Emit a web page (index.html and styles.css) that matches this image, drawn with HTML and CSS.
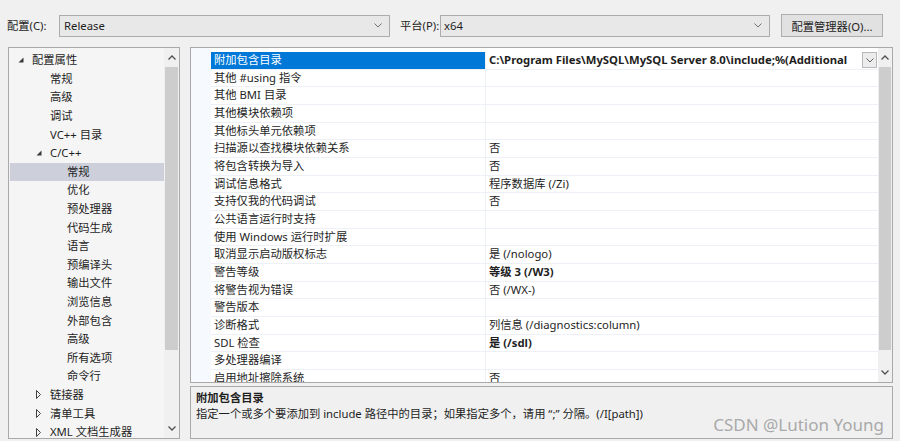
FILE: index.html
```html
<!DOCTYPE html>
<html lang="zh-CN">
<head>
<meta charset="utf-8">
<title>属性页</title>
<link rel="stylesheet" href="styles.css">
</head>
<body>
<div class="page">
  <div class="toolbar">
    <span class="tb-label cfg-label">配置(C):</span>
    <div class="combo combo-cfg"><span>Release</span><svg class="chev" width="8" height="5" viewBox="0 0 8 5"><path d="M0.5 0.5 L4 4 L7.5 0.5" fill="none" stroke="#707070" stroke-width="1"/></svg></div>
    <span class="tb-label plat-label">平台(P):</span>
    <div class="combo combo-plat"><span>x64</span><svg class="chev" width="8" height="5" viewBox="0 0 8 5"><path d="M0.5 0.5 L4 4 L7.5 0.5" fill="none" stroke="#707070" stroke-width="1"/></svg></div>
    <button class="btn">配置管理器(O)...</button>
  </div>

  <div class="main">
    <div class="tree-panel">
      <div class="tree">
        <div class="ti l1"><span class="tw"><svg width="6" height="6" viewBox="0 0 6 6"><polygon points="5.5,0.5 5.5,5.5 0.5,5.5" fill="#3a3a3a"/></svg></span>配置属性</div>
        <div class="ti l2">常规</div>
        <div class="ti l2">高级</div>
        <div class="ti l2">调试</div>
        <div class="ti l2">VC++ 目录</div>
        <div class="ti l2t"><span class="tw"><svg width="6" height="6" viewBox="0 0 6 6"><polygon points="5.5,0.5 5.5,5.5 0.5,5.5" fill="#3a3a3a"/></svg></span>C/C++</div>
        <div class="ti l3 sel">常规</div>
        <div class="ti l3">优化</div>
        <div class="ti l3">预处理器</div>
        <div class="ti l3">代码生成</div>
        <div class="ti l3">语言</div>
        <div class="ti l3">预编译头</div>
        <div class="ti l3">输出文件</div>
        <div class="ti l3">浏览信息</div>
        <div class="ti l3">外部包含</div>
        <div class="ti l3">高级</div>
        <div class="ti l3">所有选项</div>
        <div class="ti l3">命令行</div>
        <div class="ti l2t"><span class="tw"><svg width="6" height="9" viewBox="0 0 6 9"><polygon points="0.5,0.5 4.5,4.5 0.5,8.5" fill="none" stroke="#404040" stroke-width="1"/></svg></span>链接器</div>
        <div class="ti l2t"><span class="tw"><svg width="6" height="9" viewBox="0 0 6 9"><polygon points="0.5,0.5 4.5,4.5 0.5,8.5" fill="none" stroke="#404040" stroke-width="1"/></svg></span>清单工具</div>
        <div class="ti l2t"><span class="tw"><svg width="6" height="9" viewBox="0 0 6 9"><polygon points="0.5,0.5 4.5,4.5 0.5,8.5" fill="none" stroke="#404040" stroke-width="1"/></svg></span>XML 文档生成器</div>
      </div>
      <div class="vscroll tree-scroll">
        <div class="arrow"><svg width="8" height="5" viewBox="0 0 8 5"><path d="M0.5 4.5 L4 1 L7.5 4.5" fill="none" stroke="#505050" stroke-width="1.3"/></svg></div>
        <div class="track"><div class="thumb"></div></div>
        <div class="arrow"><svg width="8" height="5" viewBox="0 0 8 5"><path d="M0.5 0.5 L4 4 L7.5 0.5" fill="none" stroke="#505050" stroke-width="1.3"/></svg></div>
      </div>
    </div>

    <div class="right">
      <div class="grid-panel">
        <div class="gutter"></div>
        <div class="rows">
          <div class="row"><div class="name hl">附加包含目录</div><div class="value bold first"><span class="vtext">C:\Program Files\MySQL\MySQL Server 8.0\include;%(Additional</span><span class="ddbtn"><svg width="8" height="5" viewBox="0 0 8 5"><path d="M0.5 0.5 L4 4 L7.5 0.5" fill="none" stroke="#606060" stroke-width="1"/></svg></span></div></div>
          <div class="row"><div class="name">其他 #using 指令</div><div class="value"></div></div>
          <div class="row"><div class="name">其他 BMI 目录</div><div class="value"></div></div>
          <div class="row"><div class="name">其他模块依赖项</div><div class="value"></div></div>
          <div class="row"><div class="name">其他标头单元依赖项</div><div class="value"></div></div>
          <div class="row"><div class="name">扫描源以查找模块依赖关系</div><div class="value">否</div></div>
          <div class="row"><div class="name">将包含转换为导入</div><div class="value">否</div></div>
          <div class="row"><div class="name">调试信息格式</div><div class="value">程序数据库 (/Zi)</div></div>
          <div class="row"><div class="name">支持仅我的代码调试</div><div class="value">否</div></div>
          <div class="row"><div class="name">公共语言运行时支持</div><div class="value"></div></div>
          <div class="row"><div class="name">使用 Windows 运行时扩展</div><div class="value"></div></div>
          <div class="row"><div class="name">取消显示启动版权标志</div><div class="value">是 (/nologo)</div></div>
          <div class="row"><div class="name">警告等级</div><div class="value bold">等级 3 (/W3)</div></div>
          <div class="row"><div class="name">将警告视为错误</div><div class="value">否 (/WX-)</div></div>
          <div class="row"><div class="name">警告版本</div><div class="value"></div></div>
          <div class="row"><div class="name">诊断格式</div><div class="value">列信息 (/diagnostics:column)</div></div>
          <div class="row"><div class="name">SDL 检查</div><div class="value bold">是 (/sdl)</div></div>
          <div class="row"><div class="name">多处理器编译</div><div class="value"></div></div>
          <div class="row"><div class="name">启用地址擦除系统</div><div class="value">否</div></div>
        </div>
        <div class="vscroll grid-scroll">
          <div class="arrow"><svg width="8" height="5" viewBox="0 0 8 5"><path d="M0.5 4.5 L4 1 L7.5 4.5" fill="none" stroke="#505050" stroke-width="1.3"/></svg></div>
          <div class="track"><div class="thumb"></div></div>
          <div class="arrow"><svg width="8" height="5" viewBox="0 0 8 5"><path d="M0.5 0.5 L4 4 L7.5 0.5" fill="none" stroke="#505050" stroke-width="1.3"/></svg></div>
        </div>
      </div>
      <div class="desc">
        <div class="desc-title">附加包含目录</div>
        <div class="desc-text">指定一个或多个要添加到 include 路径中的目录；如果指定多个，请用 “;” 分隔。(/I[path])</div>
        <div class="watermark">CSDN @Lution Young</div>
      </div>
    </div>
  </div>
</div>
</body>
</html>
```
FILE: styles.css
```css
html, body {
  margin: 0;
  padding: 0;
}
body {
  background: #f0f0f0;
  font-family: "Noto Sans", "Noto Sans CJK SC", sans-serif;
  font-size: 11.3px;
  color: #1e1e1e;
  width: 900px;
  height: 441px;
  overflow: hidden;
}
.page {
  width: 900px;
  height: 441px;
  display: flex;
  flex-direction: column;
}

/* toolbar */
.toolbar {
  display: flex;
  align-items: center;
  height: 23px;
  margin-top: 14px;
  padding-left: 7px;
}
.tb-label {
  flex: none;
  line-height: 16px;
}
.cfg-label { width: 52px; }
.plat-label { width: 40px; margin-left: 10px; }
.combo {
  box-sizing: border-box;
  height: 22px;
  border: 1px solid #acacac;
  background: #e8e8e8;
  display: flex;
  align-items: center;
  justify-content: space-between;
  padding: 0 7px 0 4px;
  flex: none;
}
.combo-cfg { width: 331px; }
.combo-plat { width: 330px; padding-left: 3px; }
.btn {
  box-sizing: border-box;
  margin-left: 11px;
  width: 102px;
  height: 23px;
  border: 1px solid #adadad;
  background: #e1e1e1;
  font: inherit;
  color: #1e1e1e;
  padding: 0;
  flex: none;
}

/* main */
.main {
  display: flex;
  margin-top: 10px;
  padding-left: 8px;
  gap: 10px;
  height: 392px;
}

.tree-panel {
  box-sizing: border-box;
  width: 172px;
  height: 392px;
  border: 1px solid #a9a9a9;
  background: #f5f5f5;
  display: flex;
  overflow: hidden;
}
.tree {
  flex: 1;
  padding-top: 3px;
  overflow: hidden;
}
.ti {
  display: flex;
  align-items: center;
  height: 18.6px;
  line-height: 16px;
  white-space: nowrap;
}
.tw {
  width: 14px;
  flex: none;
  display: flex;
  align-items: center;
}
.l1 { padding-left: 9px; }
.l2 { padding-left: 41px; }
.l2t { padding-left: 27px; }
.l3 { padding-left: 58px; }
.sel {
  background: #cdcfdb;
  margin-left: 1px;
  padding-left: 57px;
}

.vscroll {
  flex: none;
  width: 15px;
  display: flex;
  flex-direction: column;
  background: #f0f0f0;
}
.arrow {
  height: 19px;
  display: flex;
  align-items: center;
  justify-content: center;
  flex: none;
}
.track {
  flex: 1;
  display: flex;
  flex-direction: column;
  padding: 0 1px;
}
.thumb {
  background: #cdcdcd;
  height: 283px;
}

/* right column */
.right {
  width: 703px;
  display: flex;
  flex-direction: column;
  gap: 3px;
}
.grid-panel {
  box-sizing: border-box;
  height: 336px;
  border: 1px solid #a9a9a9;
  background: #ffffff;
  display: flex;
  overflow: hidden;
}
.gutter {
  width: 20px;
  flex: none;
  background: #f6f9fd;
}
.rows {
  flex: 1;
  padding-top: 4px;
  overflow: hidden;
}
.row {
  display: flex;
  height: 17.67px;
  box-sizing: border-box;
  border-bottom: 1px solid #edf1f7;
}
.name {
  width: 275px;
  flex: none;
  box-sizing: border-box;
  padding-left: 3px;
  border-right: 1px solid #edf1f7;
  line-height: 16.67px;
  white-space: nowrap;
}
.name.hl {
  background: #0078d7;
  color: #ffffff;
}
.value {
  flex: 1;
  min-width: 0;
  padding-left: 3px;
  line-height: 16.67px;
  white-space: nowrap;
  overflow: hidden;
}
.bold { font-weight: bold; }
.value.first {
  display: flex;
  align-items: center;
  padding-right: 1px;
}
.vtext {
  flex: 1;
  min-width: 0;
  white-space: nowrap;
}
.ddbtn {
  flex: none;
  box-sizing: border-box;
  width: 15px;
  height: 16px;
  border: 1px solid #b8b8b8;
  background: #ececec;
  display: flex;
  align-items: center;
  justify-content: center;
  margin-left: 2px;
}
.grid-scroll { width: 14px; }

/* description */
.desc {
  position: relative;
  box-sizing: border-box;
  height: 53px;
  border: 1px solid #a9a9a9;
  background: #f0f0f0;
  padding: 3px 0 0 5px;
}
.desc-title {
  font-weight: bold;
  line-height: 16px;
}
.desc-text {
  line-height: 16px;
}
.watermark {
  position: absolute;
  right: 8px;
  bottom: 2px;
  font-family: "Noto Sans", sans-serif;
  font-size: 17px;
  color: #a9a9a9;
  line-height: 22px;
}
```
